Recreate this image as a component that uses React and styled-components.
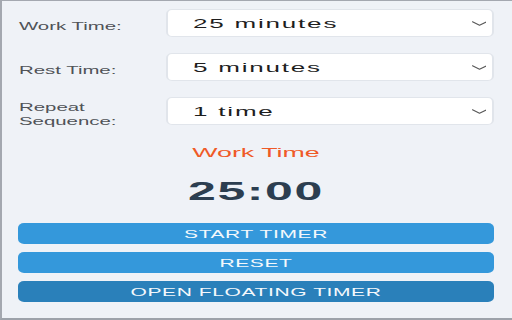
import React from "react";
import styled, { createGlobalStyle } from "styled-components";

const Global = createGlobalStyle`
  html, body { margin: 0; padding: 0; background: #eef2f7; overflow: hidden; }
  body { font-family: "Liberation Sans", Arial, Helvetica, sans-serif; }
`;

/* The reference is a narrow popup stretched 2x horizontally; we lay it out
   at its natural 256px width and stretch the whole frame the same way. */
const Stage = styled.div`
  width: 256px;
  height: 320px;
  transform: scaleX(2);
  transform-origin: 0 0;
`;

const Frame = styled.div`
  box-sizing: border-box;
  height: 320px;
  background: #eff2f7;
  border-top: 1px solid #a4a8b0;
  border-left: 1px solid #a4a8b0;
  border-bottom: 2px solid #9da2aa;
  padding: 8px 9px 0 8px;
  display: flex;
  flex-direction: column;
`;

const Settings = styled.div`
  display: flex;
  flex-direction: column;
  gap: 16px;
`;

const Row = styled.div`
  display: flex;
  align-items: center;
  height: 28px;
`;

const Label = styled.label`
  flex: 1;
  margin-top: 7px;
  padding-left: 0.5px;
  font-size: 10.2px;
  line-height: 14px;
  color: #505357;
  padding-right: 8px;
`;

const SelectBox = styled.div`
  box-sizing: border-box;
  width: 164px;
  height: 28px;
  background: #ffffff;
  border: 1px solid #e1e5eb;
  border-radius: 3px / 5px;
  display: flex;
  align-items: center;
  padding: 0 3px 0 12.5px;
`;

const Value = styled.span`
  flex: 1;
  font-size: 13px;
  letter-spacing: 0.9px;
  color: #1e1e1e;
`;

const Chevron = styled.svg`
  width: 7.5px;
  height: 5px;
  flex: none;
`;

const Status = styled.div`
  margin-top: 20px;
  text-align: center;
  font-size: 13.4px;
  line-height: 16px;
  color: #ef5a27;
`;

const Clock = styled.div`
  margin-top: 15px;
  text-align: center;
  font-size: 25px;
  line-height: 30px;
  font-weight: 700;
  letter-spacing: 0.8px;
  color: #2c3e50;
`;

const Actions = styled.div`
  margin-top: 17px;
  display: flex;
  flex-direction: column;
  gap: 8px;
`;

const Button = styled.button`
  box-sizing: border-box;
  width: 100%;
  height: 21px;
  margin: 0;
  padding: 0;
  border: none;
  border-radius: 3px / 5px;
  background: ${(p) => (p.$dark ? "#2a80ba" : "#3498db")};
  color: #f4f8fc;
  font-family: "Liberation Sans", Arial, sans-serif;
  font-size: 10.5px;
  letter-spacing: 0.3px;
  text-transform: uppercase;
  cursor: pointer;
`;

function Select({ value }) {
  return (
    <SelectBox role="combobox">
      <Value>{value}</Value>
      <Chevron viewBox="0 0 15 5" preserveAspectRatio="none">
        <path d="M0.5 0.8 L7.5 4.2 L14.5 0.8" fill="none" stroke="#555" strokeWidth="1.1" strokeLinecap="round" strokeLinejoin="round" />
      </Chevron>
    </SelectBox>
  );
}

export default function App() {
  return (
    <>
      <Global />
      <Stage>
        <Frame>
          <Settings>
            <Row>
              <Label>Work Time:</Label>
              <Select value="25 minutes" />
            </Row>
            <Row>
              <Label>Rest Time:</Label>
              <Select value="5 minutes" />
            </Row>
            <Row>
              <Label>Repeat Sequence:</Label>
              <Select value="1 time" />
            </Row>
          </Settings>
          <Status>Work Time</Status>
          <Clock>25:00</Clock>
          <Actions>
            <Button>Start Timer</Button>
            <Button>Reset</Button>
            <Button $dark>Open Floating Timer</Button>
          </Actions>
        </Frame>
      </Stage>
    </>
  );
}
